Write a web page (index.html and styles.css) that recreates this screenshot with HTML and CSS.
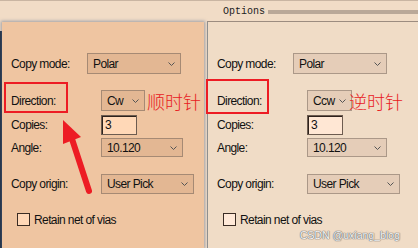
FILE: index.html
```html
<!DOCTYPE html>
<html lang="en">
<head>
  <meta charset="UTF-8">
  <meta name="viewport" content="width=device-width, initial-scale=1.0">
  <title>Polar copy options</title>
  <link rel="stylesheet" href="styles.css">
</head>
<body>
  <div class="screen">
    <!-- Left: dialog with Cw direction -->
    <div class="left">
      <div class="dialog">
        <div class="form">
          <div class="row row-mode">
            <label>Copy mode:</label>
            <div class="select select-mode"><span>Polar</span><svg class="chev" viewBox="0 0 7 4"><polyline points="0.5,0.5 3.5,3.5 6.5,0.5"/></svg></div>
          </div>
          <div class="row row-dir">
            <label>Direction:</label>
            <div class="select select-dir"><span>Cw</span><svg class="chev" viewBox="0 0 7 4"><polyline points="0.5,0.5 3.5,3.5 6.5,0.5"/></svg></div>
            <span class="note">顺时针</span>
          </div>
          <div class="row row-copies">
            <label>Copies:</label>
            <div class="input">3</div>
          </div>
          <div class="row row-angle">
            <label>Angle:</label>
            <div class="select select-angle"><span>10.120</span><svg class="chev" viewBox="0 0 7 4"><polyline points="0.5,0.5 3.5,3.5 6.5,0.5"/></svg></div>
          </div>
          <div class="row row-origin">
            <label>Copy origin:</label>
            <div class="select select-origin"><span>User Pick</span><svg class="chev" viewBox="0 0 7 4"><polyline points="0.5,0.5 3.5,3.5 6.5,0.5"/></svg></div>
          </div>
          <div class="row row-check">
            <span class="box"></span>
            <span>Retain net of vias</span>
          </div>
        </div>
      </div>
    </div>

    <!-- Right: Options group with Ccw direction -->
    <div class="right">
      <div class="legend">
        <span>Options</span>
        <span class="bar"></span>
      </div>
      <div class="group">
        <div class="form">
          <div class="row row-mode">
            <label>Copy mode:</label>
            <div class="select select-mode"><span>Polar</span><svg class="chev" viewBox="0 0 7 4"><polyline points="0.5,0.5 3.5,3.5 6.5,0.5"/></svg></div>
          </div>
          <div class="row row-dir">
            <label>Direction:</label>
            <div class="select select-dir wide"><span>Ccw</span><svg class="chev" viewBox="0 0 7 4"><polyline points="0.5,0.5 3.5,3.5 6.5,0.5"/></svg></div>
            <span class="note note-tight">逆时针</span>
          </div>
          <div class="row row-copies">
            <label>Copies:</label>
            <div class="input">3</div>
          </div>
          <div class="row row-angle">
            <label>Angle:</label>
            <div class="select select-angle short"><span>10.120</span><svg class="chev" viewBox="0 0 7 4"><polyline points="0.5,0.5 3.5,3.5 6.5,0.5"/></svg></div>
          </div>
          <div class="row row-origin">
            <label>Copy origin:</label>
            <div class="select select-origin"><span>User Pick</span><svg class="chev" viewBox="0 0 7 4"><polyline points="0.5,0.5 3.5,3.5 6.5,0.5"/></svg></div>
          </div>
          <div class="row row-check">
            <span class="box"></span>
            <span>Retain net of vias</span>
          </div>
        </div>
      </div>
      <div class="watermark">CSDN @uxiang_blog</div>
    </div>

    <!-- Red annotations drawn over the screenshot -->
    <svg class="annot" width="418" height="248" viewBox="0 0 418 248">
      <rect x="5" y="82" width="62" height="29" />
      <rect x="207" y="79" width="61" height="33" />
      <line class="shaft" x1="72" y1="138" x2="89" y2="190" />
      <polygon class="head" points="63,119 63,143 81,136" />
    </svg>
  </div>
</body>
</html>
```

FILE: styles.css
```css
body {
  margin: 0;
  background-color: #f1dcc6;
  font-family: "Liberation Sans", Arial, sans-serif;
  font-size: 12px;
  letter-spacing: -0.6px;
  color: #111;
}

.screen {
  position: relative;
  display: flex;
  width: 418px;
  height: 248px;
  overflow: hidden;
  background-color: #f1dcc6;
  border-top: 1px solid #c9b5a2;
  box-sizing: border-box;
}

/* left window */
.left {
  width: 206px;
  padding: 21px 0 0 2px;
  box-sizing: border-box;
  background: linear-gradient(#1c2a3c, #1c2a3c) 0 30px / 2px 100% no-repeat;
}

.dialog {
  width: 202px;
  height: 100%;
  background-color: #efc5a1;
  box-shadow: 0 0 3px 1px rgba(90, 110, 140, 0.55);
}

/* right group box */
.right {
  position: relative;
  flex: 1;
  margin-left: 1px;
}

.legend {
  display: flex;
  align-items: center;
  height: 20px;
  padding-left: 16px;
  font-family: "Liberation Mono", "Courier New", monospace;
  font-size: 10px;
  letter-spacing: 0;
  color: #222;
}

.legend .bar {
  flex: 1;
  height: 4px;
  margin: 1px 0 0 3px;
  background-color: #baa898;
}

.group {
  height: 100%;
  border-top: 1px solid #9c8c80;
  border-left: 1px solid #8f8f8f;
  background-color: #f0dcc6;
}

/* form rows */
.form {
  padding: 31px 0 0 9px;
}

.row {
  display: flex;
  align-items: center;
}

.row label {
  width: 90px;
  flex-shrink: 0;
}

.row-mode { height: 21px; }
.row-mode label { width: 76px; }
.row-dir { height: 21px; margin-top: 16px; }
.row-copies { height: 20px; margin-top: 4px; }
.row-angle { height: 19px; margin-top: 3px; }
.row-origin { height: 20px; margin-top: 17px; }
.row-check { height: 13px; margin-top: 19px; padding-left: 6px; }

.select {
  display: flex;
  align-items: center;
  justify-content: space-between;
  height: 100%;
  padding: 0 5px 0 5px;
  box-sizing: border-box;
  background-color: #e3b793;
  border: 1px solid #a68a74;
}

.right .select {
  background-color: #e5cdb8;
  border-color: #ab9888;
}

.select-mode { width: 94px; }
.select-dir { width: 44px; }
.select-dir.wide { width: 45px; }
.select-angle { width: 82px; }
.select-angle.short { width: 80px; }
.select-origin { width: 93px; }

.chev {
  width: 7px;
  height: 4px;
  fill: none;
  stroke: #555;
  stroke-width: 1;
}

.input {
  width: 36px;
  height: 100%;
  padding-left: 3px;
  box-sizing: border-box;
  display: flex;
  align-items: center;
  background-color: #ffd8b7;
  border: 1px solid #6d5c50;
  box-shadow: inset 1px 1px 0 #2e221c;
}

.right .input {
  background-color: #ffe7d4;
}

.box {
  width: 13px;
  height: 13px;
  margin-right: 4px;
  box-sizing: border-box;
  border: 1px solid #3a2c24;
  background-color: #ffd8b7;
}

.right .box {
  background-color: #ffe9d8;
}

.note {
  margin-left: 2px;
  font-family: "Noto Sans CJK SC", sans-serif;
  font-size: 18px;
  font-weight: 300;
  line-height: 18px;
  letter-spacing: 0;
  color: #e8201e;
}

.note-tight {
  margin-left: -3px;
}

.watermark {
  position: absolute;
  right: 18px;
  bottom: 7px;
  font-size: 10.5px;
  letter-spacing: 0;
  color: #f6f6f6;
  text-shadow: 0 0 1px #6e6e6e, 0 0 1px #6e6e6e, 0 0 1px #6e6e6e;
}

/* annotations */
.annot {
  position: absolute;
  left: 0;
  top: 0;
  pointer-events: none;
}

.annot rect {
  fill: none;
  stroke: #ed1c24;
  stroke-width: 2;
}

.annot .shaft {
  stroke: #ed1c24;
  stroke-width: 6;
  stroke-linecap: round;
}

.annot .head {
  fill: #ed1c24;
}
```
